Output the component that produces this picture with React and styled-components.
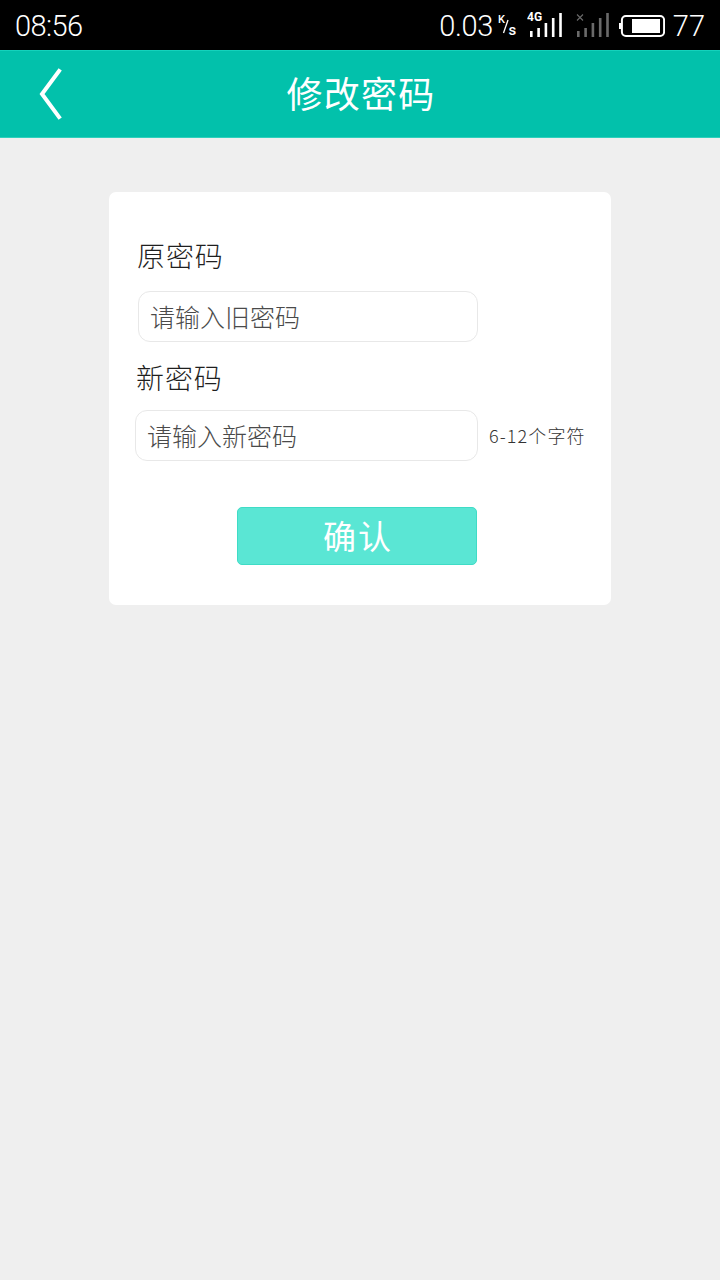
import React from 'react';
import styled, { createGlobalStyle } from 'styled-components';

const GlobalStyle = createGlobalStyle`
  html, body {
    margin: 0;
    padding: 0;
    background: #efefef;
    font-family: "Noto Sans CJK SC", "Noto Sans", sans-serif;
  }
  * { box-sizing: border-box; }
`;

const Page = styled.div`
  width: 720px;
  height: 1280px;
  background: #efefef;
  display: flex;
  flex-direction: column;
  overflow: hidden;
`;

const StatusBar = styled.div`
  height: 50px;
  background: #000;
  color: #fff;
  display: flex;
  align-items: center;
  padding: 2px 15px 0 15px;
  font-family: Roboto, "Liberation Sans", sans-serif;
  font-weight: 300;
`;

const Clock = styled.span`
  font-size: 29px;
  letter-spacing: -0.6px;
`;

const StatusRight = styled.div`
  margin-left: auto;
  display: flex;
  align-items: center;
`;

const Speed = styled.span`
  font-size: 29px;
  letter-spacing: -0.4px;
  margin-right: 4px;
`;

const StatusIcon = styled.svg`
  display: block;
  margin-left: ${p => p.$gap}px;
`;

const BatteryLevel = styled.span`
  font-size: 29px;
  margin-left: 8px;
`;

const Header = styled.header`
  height: 88px;
  padding-bottom: 5px;
  background: #02c1ab;
  border-top: 1px solid #14d2bc;
  border-bottom: 1px solid #2fd0bc;
  display: flex;
  align-items: center;
  justify-content: center;
  position: relative;
`;

const BackButton = styled.button`
  position: absolute;
  left: 38px;
  top: 17px;
  padding: 0;
  border: 0;
  background: none;
  display: flex;
`;

const Title = styled.h1`
  margin: 0 0 0 2px;
  color: #fff;
  font-size: 36px;
  font-weight: 400;
  letter-spacing: 1.2px;
  line-height: 1;
`;

const Card = styled.section`
  width: 502px;
  height: 413px;
  margin: 54px 0 0 109px;
  padding: 43px 26px 0 26px;
  background: #fff;
  border-radius: 7px;
`;

const Label = styled.div`
  margin-top: ${p => p.$top}px;
  margin-left: ${p => p.$indent}px;
  font-size: 28px;
  line-height: 40px;
  font-weight: 300;
  letter-spacing: 0.9px;
  color: #1f1f1f;
`;

const Row = styled.div`
  display: flex;
  align-items: center;
  margin-top: ${p => p.$top}px;
`;

const Field = styled.input`
  flex-shrink: 0;
  width: ${p => p.$width}px;
  height: 51px;
  margin-left: ${p => p.$indent}px;
  padding: 0 11px 2px 11px;
  border: 1px solid #e8e8e8;
  border-radius: 12px;
  background: #fff;
  outline: none;
  font-family: inherit;
  font-size: 25px;
  font-weight: 300;
  &::placeholder {
    color: #4a4a4a;
    opacity: 1;
  }
`;

const Hint = styled.span`
  flex-shrink: 0;
  margin: 0 0 2px 11px;
  font-size: 18px;
  font-weight: 300;
  letter-spacing: 1.1px;
  color: #333;
  white-space: nowrap;
`;

const Submit = styled.button`
  display: flex;
  align-items: center;
  justify-content: center;
  width: 240px;
  height: 58px;
  margin: 46px 0 0 102px;
  padding: 0 0 2px 2px;
  border: 1px solid #3fdcc6;
  border-radius: 5px;
  background: #5ae6d4;
  color: #fff;
  font-family: inherit;
  font-size: 33px;
  font-weight: 400;
  letter-spacing: 2px;
`;

function SpeedUnit() {
  return (
    <StatusIcon $gap={0} width="21" height="26" viewBox="0 0 21 26" fill="#fff">
      <text x="1" y="9.5" fontSize="11" fontWeight="500" fontFamily="Roboto, sans-serif">K</text>
      <path d="M11 7 L6.5 20" stroke="#fff" strokeWidth="1.3" />
      <text x="11.5" y="22" fontSize="15" fontWeight="500" fontFamily="Roboto, sans-serif">s</text>
    </StatusIcon>
  );
}

const barTops = [18, 15, 10, 5, 0];

function SignalIcon({ dim, gap }) {
  const colour = dim ? '#6a6a6a' : '#fff';
  return (
    <StatusIcon $gap={gap} width="36" height="30" viewBox="0 -2 36 30">
      {barTops.map((top, i) => (
        <rect key={i} x={3 + i * 7.3} y={top} width="2.6" height={24 - top} fill={colour} />
      ))}
      {dim ? (
        <path d="M3 1.5 L9 7.5 M9 1.5 L3 7.5" stroke={colour} strokeWidth="1.1" fill="none" />
      ) : (
        <text x="0" y="8" fontSize="12" fontWeight="700" fill="#fff" fontFamily="Roboto, sans-serif">4G</text>
      )}
    </StatusIcon>
  );
}

function BatteryIcon() {
  return (
    <StatusIcon $gap={9} width="46" height="23" viewBox="0 0 46 23">
      <rect x="2.9" y="1" width="42.2" height="20" rx="4" fill="none" stroke="#fff" strokeWidth="2" />
      <rect x="0" y="8" width="2" height="6" fill="#fff" />
      <rect x="13" y="4" width="28" height="14" fill="#fff" />
    </StatusIcon>
  );
}

function App() {
  return (
    <Page>
      <GlobalStyle />
      <StatusBar>
        <Clock>08:56</Clock>
        <StatusRight>
          <Speed>0.03</Speed>
          <SpeedUnit />
          <SignalIcon gap={9} />
          <SignalIcon dim gap={11} />
          <BatteryIcon />
          <BatteryLevel>77</BatteryLevel>
        </StatusRight>
      </StatusBar>
      <Header>
        <BackButton aria-label="back">
          <svg width="28" height="52" viewBox="0 0 28 52">
            <path d="M21 3 L4 26 L21 49" fill="none" stroke="#fff" strokeWidth="4" strokeLinecap="square" />
          </svg>
        </BackButton>
        <Title>修改密码</Title>
      </Header>
      <Card>
        <Label $top={0} $indent={2}>原密码</Label>
        <Row $top={16}>
          <Field $indent={3} $width={340} placeholder="请输入旧密码" />
        </Row>
        <Label $top={15} $indent={1}>新密码</Label>
        <Row $top={13}>
          <Field $indent={0} $width={343} placeholder="请输入新密码" />
          <Hint>6-12个字符</Hint>
        </Row>
        <Submit>确认</Submit>
      </Card>
    </Page>
  );
}

export default App;
